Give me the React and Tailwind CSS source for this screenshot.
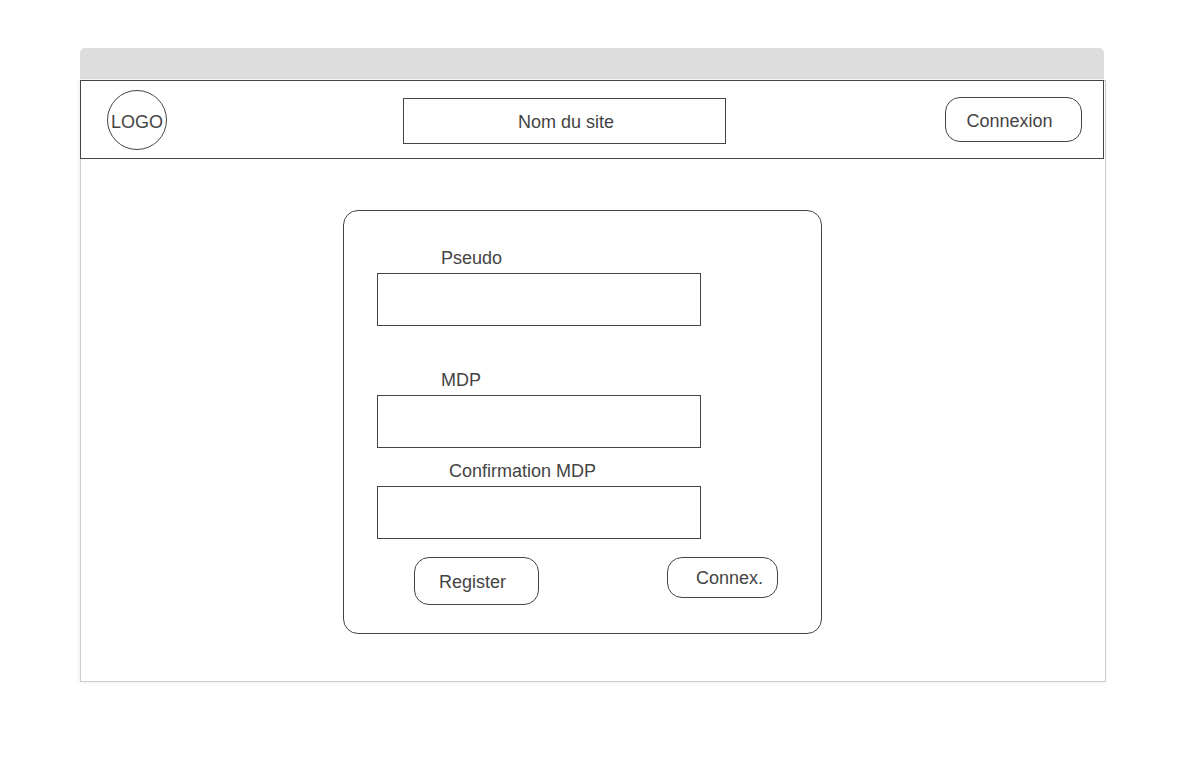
function Field({ id, label, type, indent, className }) {
  return (
    <div className={className}>
      <label htmlFor={id} className={`mb-[3px] block ${indent}`}>
        {label}
      </label>
      <input
        id={id}
        type={type}
        className="block h-[53px] w-full max-w-[324px] border border-[#444] bg-white px-3 outline-none"
      />
    </div>
  );
}

export default function App() {
  return (
    <div className="bg-white px-20 py-12 font-['Liberation_Sans',Arial,sans-serif] text-[18px] leading-6 text-[#444]">
      <div className="h-[31px] rounded-t-[5px] bg-[#ddd]" />
      <div className="mt-px -mr-0.5 border border-[#ccc] bg-white shadow-[-1px_0_4px_rgba(0,0,0,0.08)]">
        <header className="-mt-px mr-px -ml-px flex items-start justify-between border border-[#444] bg-white pt-[9px] pr-[21px] pb-2 pl-[26px]">
          <a
            href="#"
            className="flex size-[60px] shrink-0 items-center justify-center rounded-full border border-[#444] pt-1"
          >
            LOGO
          </a>
          <h1 className="mt-2 ml-[17px] flex h-[46px] w-[323px] items-center justify-center border border-[#444] pt-0.5 pl-[3px]">
            Nom du site
          </h1>
          <button
            type="button"
            className="mt-[7px] h-[45px] w-[137px] shrink-0 rounded-[15px] border border-[#444] pt-0.5 pr-2"
          >
            Connexion
          </button>
        </header>
        <main className="flex justify-center pt-[51px] pr-[21px] pb-[47px]">
          <form
            className="w-full max-w-[479px] rounded-[15px] border border-[#444] pt-[35px] pr-[43px] pb-7 pl-[33px]"
            onSubmit={(e) => e.preventDefault()}
          >
            <Field id="pseudo" label="Pseudo" type="text" indent="pl-16" />
            <Field id="mdp" label="MDP" type="password" indent="pl-16" className="mt-[42px]" />
            <Field
              id="confirmation"
              label="Confirmation MDP"
              type="password"
              indent="pl-18"
              className="mt-[11px]"
            />
            <div className="mt-[18px] flex items-start justify-between pl-[37px]">
              <button
                type="submit"
                className="h-12 w-[125px] rounded-[15px] border border-[#444] pt-0.5 pr-2"
              >
                Register
              </button>
              <button
                type="button"
                className="h-[41px] w-[111px] rounded-[15px] border border-[#444] pl-7 text-left"
              >
                Connex.
              </button>
            </div>
          </form>
        </main>
      </div>
    </div>
  );
}
